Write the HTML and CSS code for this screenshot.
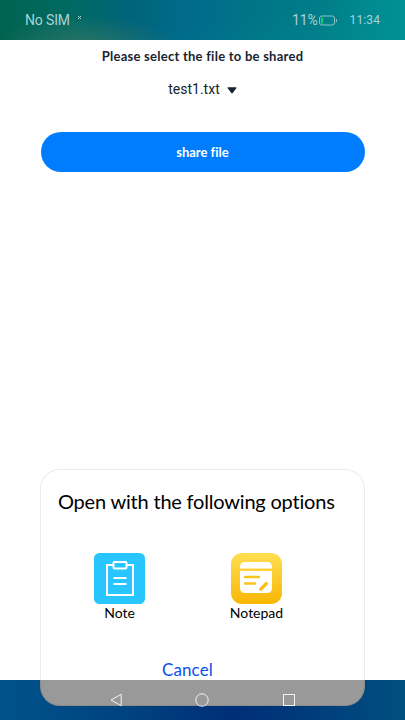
FILE: index.html
```
<!DOCTYPE html>
<html lang="en">
<head>
<meta charset="utf-8">
<meta name="viewport" content="width=device-width, initial-scale=1">
<title>Share file</title>
<link rel="stylesheet" href="styles.css">
</head>
<body>
<div class="phone">
  <header class="status">
    <span class="carrier">No SIM</span>
    <svg class="nosignal" width="5" height="5" viewBox="0 0 5 5"><path d="M1 1l3 3M4 1L1 4"/></svg>
    <span class="percent">11%</span>
    <svg class="battery" width="19" height="11" viewBox="0 0 19 11"><rect class="shell" x=".6" y="1" width="14.8" height="9" rx="2"/><path class="level" d="M2 2.5h2v6H2z"/><path class="tip" d="M17.4 4v3.2"/></svg>
    <span class="clock">11:34</span>
  </header>
  <main class="page">
    <h1 class="prompt">Please select the file to be shared</h1>
    <div class="select">
      <span>test1.txt</span>
      <svg width="10" height="7" viewBox="0 0 10 7"><path d="M1.2 .3h7.6q1.2 0 .5 1L5.9 5.8q-.9 1-1.8 0L.7 1.3q-.7-1 .5-1z"/></svg>
    </div>
    <button class="share">share file</button>
  </main>
  <nav class="nav"></nav>
  <section class="dialog">
    <h2 class="title">Open with the following options</h2>
    <div class="apps">
      <div class="app">
        <svg width="51" height="51" viewBox="0 0 51 51">
          <rect width="51" height="51" rx="5.5" fill="#29c5ff"/>
          <g fill="none" stroke="#fff" stroke-width="2">
            <path d="M19 12h-6v30h26V12h-6"/>
            <rect x="19.5" y="9" width="13" height="6.5" rx="1"/>
            <path d="M19.5 25h13M19.5 31h13"/>
          </g>
        </svg>
        <span class="label">Note</span>
      </div>
      <div class="app">
        <svg width="51" height="51" viewBox="0 0 51 51">
          <defs><linearGradient id="gold" x1="0" y1="0" x2="0" y2="1"><stop offset="0" stop-color="#ffdf52"/><stop offset="1" stop-color="#f8b604"/></linearGradient></defs>
          <rect width="51" height="51" rx="11" fill="url(#gold)"/>
          <path fill="#fff" d="M9 15.5V14q0-5 5-5h22q5 0 5 5v1.5zM9 18h32v17q0 5-5 5H14q-5 0-5-5z"/>
          <path d="M14 24h14M14 30.5h10" fill="none" stroke="#f9c51b" stroke-width="2.4" stroke-linecap="round"/>
          <path d="M29.8 36.2l5.5-5.6" stroke="#f8c018" stroke-width="3.4" stroke-linecap="round"/>
        </svg>
        <span class="label">Notepad</span>
      </div>
    </div>
    <div class="cancel">Cancel</div>
  </section>
  <div class="keys">
    <svg width="12" height="14" viewBox="0 0 12 14"><path d="M11.2 1.2v11.6L1 7z"/></svg>
    <svg width="14" height="14" viewBox="0 0 14 14"><circle cx="7" cy="7" r="6.2"/></svg>
    <svg width="14" height="14" viewBox="0 0 14 14"><rect x="1.5" y="1.5" width="11" height="11"/></svg>
  </div>
</div>
</body>
</html>
```
FILE: styles.css
```
* { box-sizing: border-box; }
body { margin: 0; font-family: Lato, "Liberation Sans", sans-serif; font-variant-ligatures: none; }
.phone {
  position: relative;
  display: flex;
  flex-direction: column;
  width: 405px;
  height: 720px;
  overflow: hidden;
  background: #fff;
}
.status {
  display: flex;
  align-items: center;
  height: 40px;
  padding: 0 25px;
  color: #a9d2d6;
  font-family: Roboto, sans-serif;
  background:
    radial-gradient(ellipse 90px 28px at 85px 44px, rgba(67, 122, 99, .6), transparent),
    linear-gradient(170deg, transparent 55%, rgba(0, 145, 150, .25)),
    linear-gradient(90deg, #00634f 0, #006a62 70px, #006478 125px, #006b8c 190px, #007487 250px, #007d88 320px, #009295 405px);
}
.carrier { font-size: 14px; letter-spacing: -.15px; }
.nosignal { margin: -6px 0 0 7px; fill: none; stroke: #a9d2d6; }
.percent { margin-left: auto; font-size: 14px; letter-spacing: -.1px; }
.battery { margin-left: 1px; fill: none; stroke: #8fc4c6; }
.battery .level { fill: #10d060; stroke: none; }
.clock { margin-left: 12px; font-size: 12px; letter-spacing: .1px; }
.page {
  display: flex;
  flex-direction: column;
  align-items: center;
  height: 640px;
  color: #182431;
}
.prompt { margin: 7px 0 0; font-size: 13px; line-height: 18px; font-weight: 700; letter-spacing: .25px; white-space: nowrap; }
.select {
  display: flex;
  align-items: center;
  gap: 7px;
  height: 20px;
  margin-top: 14px;
  font: 14px/20px Roboto, sans-serif;
}
.select svg { margin-top: 2px; fill: #182431; }
.share {
  width: 324px;
  height: 40px;
  margin-top: 33px;
  padding: 0;
  border: 0;
  border-radius: 20px;
  background: #007dff;
  color: #fff;
  font: 700 13px/40px Lato, sans-serif;
  font-variant-ligatures: none;
}
.nav {
  height: 40px;
  background: linear-gradient(90deg, #00538a 0, #00427f 130px, #002e78 235px, #003c7b 310px, #00507f 405px);
}
.dialog {
  position: absolute;
  left: 40px;
  top: 469px;
  width: 325px;
  height: 237px;
  border: 1px solid rgba(0, 0, 0, .08);
  border-radius: 20px;
  background: linear-gradient(#fff 211px, #999 211px) border-box;
  color: #000;
}
.title { margin: 17px 0 0 17px; font-size: 20px; line-height: 28px; font-weight: 400; letter-spacing: -.2px; white-space: nowrap; }
.apps {
  display: grid;
  grid-template-columns: 137px 137px;
  margin: 38px 0 0 10px;
}
.app { display: flex; flex-direction: column; align-items: center; }
.label { font-size: 14px; line-height: 18px; }
.cancel { margin-top: 36px; padding-left: 121px; font-size: 17px; line-height: 24px; letter-spacing: .1px; color: #0a50e8; }
.keys {
  position: absolute;
  left: 110px;
  top: 693px;
  display: flex;
  gap: 73px;
  align-items: center;
}
.keys svg { fill: none; stroke: #f2f2f2; stroke-width: 1; }
```
